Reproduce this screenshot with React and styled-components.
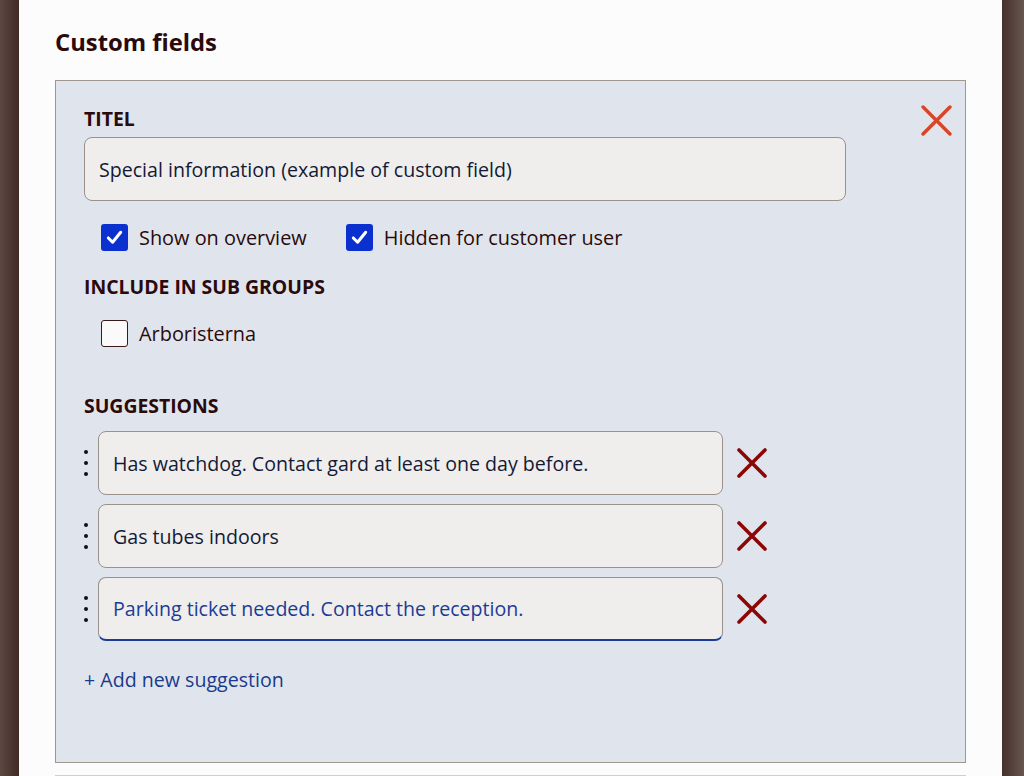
import React from "react";
import styled, { createGlobalStyle } from "styled-components";

const GlobalStyle = createGlobalStyle`
  html, body {
    margin: 0;
    padding: 0;
  }
  body {
    font-family: "Open Sans", "Noto Sans", sans-serif;
    background: #fcfcfc;
  }
`;

const Shell = styled.div`
  display: flex;
  min-height: 776px;
`;

const Side = styled.div`
  width: ${(p) => (p.right ? "22px" : "19px")};
  flex-shrink: 0;
  background: ${(p) =>
    p.right
      ? "linear-gradient(to right, #45302a, #675650)"
      : "linear-gradient(to right, #5c4842, #402b25)"};
`;

const Content = styled.main`
  flex: 1;
  background: #fcfcfc;
  padding: 27px 36px 0 36px;
`;

const Heading = styled.h2`
  margin: 0;
  font-size: 23.8px;
  line-height: 30px;
  font-weight: 700;
  color: #2a0a0a;
`;

const Panel = styled.section`
  position: relative;
  margin-top: 23px;
  border: 1px solid #9f968f;
  background: #e0e5ed;
  padding: 26px 28px 70px 28px;
`;

const CloseButton = styled.button`
  position: absolute;
  top: 24px;
  right: 13px;
  width: 31px;
  height: 31px;
  padding: 0;
  border: 0;
  background: none;
  cursor: pointer;
`;

const Label = styled.div`
  font-size: 19.4px;
  line-height: 24px;
  font-weight: 700;
  text-transform: uppercase;
  color: #2a0a0a;
  margin-top: ${(p) => p.gap || 0}px;
`;

const TextInput = styled.input`
  box-sizing: border-box;
  display: block;
  width: ${(p) => p.width || 762}px;
  height: 64px;
  margin-top: ${(p) => p.gap || 0}px;
  padding: 0 14px;
  border: 1.5px solid #9a918b;
  border-bottom: ${(p) => (p.focused ? "2px solid #1c3c94" : "1.5px solid #9a918b")};
  border-radius: 8px;
  background: #efeeec;
  font-family: inherit;
  font-size: 19.6px;
  color: ${(p) => (p.focused ? "#1a3c96" : "#141a36")};
  outline: none;
`;

const CheckRow = styled.div`
  display: flex;
  align-items: center;
  gap: 39px;
  padding-left: 17px;
  margin-top: ${(p) => p.gap || 0}px;
`;

const CheckItem = styled.label`
  display: flex;
  align-items: center;
  gap: 11px;
  font-size: 19.9px;
  line-height: 27px;
  color: #2a0a0a;
`;

const Box = styled.span`
  box-sizing: border-box;
  width: 27px;
  height: 27px;
  border-radius: 3px;
  display: flex;
  align-items: center;
  justify-content: center;
  background: ${(p) => (p.checked ? "#0a30cf" : "#fafafa")};
  border: ${(p) => (p.checked ? "0" : "1.5px solid #3a1a18")};
`;

const SuggestionList = styled.div`
  display: flex;
  flex-direction: column;
  gap: 9px;
  margin-top: 13px;
`;

const SuggestionRow = styled.div`
  display: flex;
  align-items: center;
`;

const Handle = styled.span`
  width: 14px;
  height: 64px;
  display: flex;
  flex-direction: column;
  align-items: center;
  justify-content: center;
  gap: 7px;
  margin-left: -5px;
  margin-right: 5px;
`;

const Dot = styled.span`
  width: 4px;
  height: 4px;
  border-radius: 50%;
  background: #111;
`;

const RemoveButton = styled.button`
  width: 30px;
  height: 30px;
  margin-left: 14px;
  padding: 0;
  border: 0;
  background: none;
  cursor: pointer;
`;

const AddLink = styled.a`
  display: inline-block;
  margin-top: 27px;
  font-size: 19.6px;
  line-height: 24px;
  color: #1a3a8c;
  text-decoration: none;
`;

const Divider = styled.div`
  margin-top: 12px;
  border-top: 1px solid #cfcfcf;
`;

function Cross({ color, size, width }) {
  return (
    <svg width={size} height={size} viewBox="0 0 30 30">
      <path d="M2 2 L28 28 M28 2 L2 28" stroke={color} strokeWidth={width} strokeLinecap="round" />
    </svg>
  );
}

function Check() {
  return (
    <svg width="19" height="19" viewBox="0 0 20 20">
      <path d="M3.5 10.5 L8 15 L16.5 4.5" fill="none" stroke="#fff" strokeWidth="3.2" strokeLinecap="round" strokeLinejoin="round" />
    </svg>
  );
}

function Checkbox({ checked, children }) {
  return (
    <CheckItem>
      <Box checked={checked}>{checked && <Check />}</Box>
      {children}
    </CheckItem>
  );
}

const suggestions = [
  "Has watchdog. Contact gard at least one day before.",
  "Gas tubes indoors",
  "Parking ticket needed. Contact the reception.",
];

export default function App() {
  return (
    <>
      <GlobalStyle />
      <Shell>
        <Side />
        <Content>
          <Heading>Custom fields</Heading>
          <Panel>
            <CloseButton aria-label="Remove field">
              <Cross color="#d8462a" size={31} width={3.4} />
            </CloseButton>
            <Label>Titel</Label>
            <TextInput gap={6} readOnly value="Special information (example of custom field)" />
            <CheckRow gap={23}>
              <Checkbox checked>Show on overview</Checkbox>
              <Checkbox checked>Hidden for customer user</Checkbox>
            </CheckRow>
            <Label gap={24}>Include in sub groups</Label>
            <CheckRow gap={21}>
              <Checkbox>Arboristerna</Checkbox>
            </CheckRow>
            <Label gap={47}>Suggestions</Label>
            <SuggestionList>
              {suggestions.map((s, i) => (
                <SuggestionRow key={s}>
                  <Handle>
                    <Dot />
                    <Dot />
                    <Dot />
                  </Handle>
                  <TextInput width={625} readOnly value={s} focused={i === 2} />
                  <RemoveButton aria-label="Remove suggestion">
                    <Cross color="#8c0606" size={30} width={3.6} />
                  </RemoveButton>
                </SuggestionRow>
              ))}
            </SuggestionList>
            <AddLink href="#">+ Add new suggestion</AddLink>
          </Panel>
          <Divider />
        </Content>
        <Side right />
      </Shell>
    </>
  );
}
